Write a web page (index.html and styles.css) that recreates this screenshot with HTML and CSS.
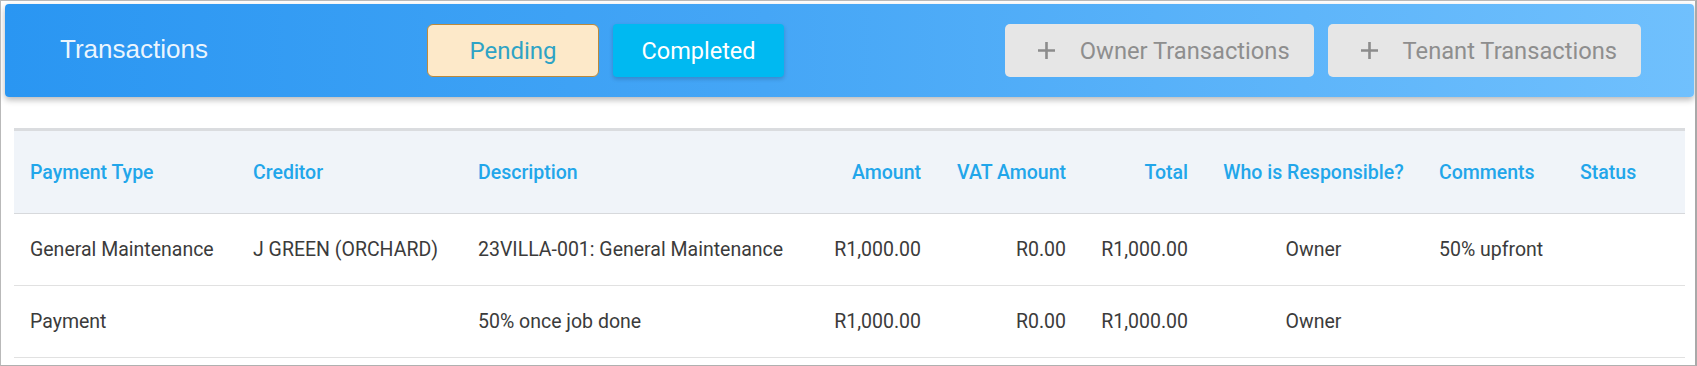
FILE: index.html
```html
<!DOCTYPE html>
<html lang="en">
<head>
<meta charset="utf-8">
<title>Transactions</title>
<link rel="stylesheet" href="styles.css">
</head>
<body>
<div class="frame">
  <header class="topbar">
    <h1 class="title">Transactions</h1>
    <div class="tabs">
      <button class="tab tab-pending">Pending</button>
      <button class="tab tab-completed">Completed</button>
    </div>
    <div class="actions">
      <button class="add-btn">
        <svg class="plus" viewBox="0 0 19 19" width="19" height="19"><path d="M9.5 1v17M1 9.5h17" stroke="currentColor" stroke-width="2.6" fill="none"/></svg>
        <span>Owner Transactions</span>
      </button>
      <button class="add-btn">
        <svg class="plus" viewBox="0 0 19 19" width="19" height="19"><path d="M9.5 1v17M1 9.5h17" stroke="currentColor" stroke-width="2.6" fill="none"/></svg>
        <span>Tenant Transactions</span>
      </button>
    </div>
  </header>

  <table class="grid">
    <colgroup>
      <col class="c-type"><col class="c-creditor"><col class="c-desc"><col class="c-amount"><col class="c-vat"><col class="c-total"><col class="c-who"><col class="c-comments"><col class="c-status">
    </colgroup>
    <thead>
      <tr>
        <th>Payment Type</th>
        <th>Creditor</th>
        <th>Description</th>
        <th class="num">Amount</th>
        <th class="num">VAT Amount</th>
        <th class="num">Total</th>
        <th class="center">Who is Responsible?</th>
        <th>Comments</th>
        <th>Status</th>
      </tr>
    </thead>
    <tbody>
      <tr>
        <td>General Maintenance</td>
        <td>J GREEN (ORCHARD)</td>
        <td>23VILLA-001: General Maintenance</td>
        <td class="num">R1,000.00</td>
        <td class="num">R0.00</td>
        <td class="num">R1,000.00</td>
        <td class="center">Owner</td>
        <td>50% upfront</td>
        <td></td>
      </tr>
      <tr>
        <td>Payment</td>
        <td></td>
        <td>50% once job done</td>
        <td class="num">R1,000.00</td>
        <td class="num">R0.00</td>
        <td class="num">R1,000.00</td>
        <td class="center">Owner</td>
        <td></td>
        <td></td>
      </tr>
    </tbody>
  </table>
</div>
</body>
</html>
```

FILE: styles.css
```css
* { box-sizing: border-box; }

html, body {
  margin: 0;
  padding: 0;
  background: #ffffff;
}

body {
  font-family: Roboto, "Liberation Sans", Arial, sans-serif;
  color: #3a3a3a;
}

.frame {
  width: 1697px;
  height: 366px;
  border: 1px solid #b9b9b9;
  border-right: 2px solid #a9a9a9;
  border-bottom: 1px solid #b0b0b0;
  padding: 3px 0 0 4px;
  overflow: hidden;
  background: #ffffff;
}

.topbar {
  width: 1689px;
  height: 93px;
  display: flex;
  align-items: center;
  padding: 0 53px 0 55px;
  border-radius: 4px;
  background: linear-gradient(to right, #2a96f2 0%, #45a6f6 45%, #70c0fd 100%);
  box-shadow: 0 3px 6px rgba(0, 0, 0, 0.28);
}

.title {
  width: 367px;
  margin: 0;
  font-family: "Liberation Sans", Arial, sans-serif;
  font-weight: 400;
  font-size: 26px;
  color: rgba(255, 255, 255, 0.92);
  line-height: 1;
  position: relative;
  top: -2px;
}

.tabs {
  display: flex;
  gap: 14px;
}

.tab {
  width: 172px;
  height: 53px;
  border-radius: 6px;
  font-family: Roboto, sans-serif;
  font-size: 24px;
  cursor: pointer;
  padding: 0;
}

.tab-pending {
  background: #fde9c9;
  border: 1px solid #bb8a3c;
  color: #2ea3c5;
  font-weight: 400;
}

.tab-completed {
  width: 171px;
  background: #00b9f1;
  border: none;
  border-radius: 4px;
  color: #ffffff;
  font-weight: 400;
  font-size: 23.5px;
  box-shadow: 0 2px 4px rgba(0, 0, 0, 0.18);
}

.actions {
  margin-left: auto;
  display: flex;
  gap: 14px;
}

.add-btn {
  height: 53px;
  display: flex;
  align-items: center;
  gap: 24px;
  padding: 0 24px 0 32px;
  border: none;
  border-radius: 5px;
  background: #e6e6e6;
  color: #8e8e8e;
  font-family: Roboto, sans-serif;
  font-size: 23.7px;
  font-weight: 400;
}

.plus {
  flex: none;
  color: #8c8c8c;
}

.grid {
  margin: 31px 0 0 9px;
  width: 1671px;
  table-layout: fixed;
  border-collapse: separate;
  border-spacing: 0;
  border-top: 3px solid #dadcdf;
  font-size: 19.5px;
}

.c-type { width: 223px; }
.c-creditor { width: 225px; }
.c-desc { width: 335px; }
.c-amount { width: 140px; }
.c-vat { width: 145px; }
.c-total { width: 122px; }
.c-who { width: 219px; }
.c-comments { width: 141px; }
.c-status { width: 121px; }

.grid th,
.grid td {
  padding: 0 16px;
  text-align: left;
  white-space: nowrap;
}

.grid th {
  height: 83px;
  background: #f0f4f9;
  color: #22a6ea;
  font-weight: 500;
  border-bottom: 1px solid #d7d9dc;
}

.grid td {
  height: 72px;
  color: #3b3b3b;
  font-weight: 400;
  border-bottom: 1px solid #e1e1e1;
}

.grid .num { text-align: right; }
.grid .center { text-align: center; }
```
